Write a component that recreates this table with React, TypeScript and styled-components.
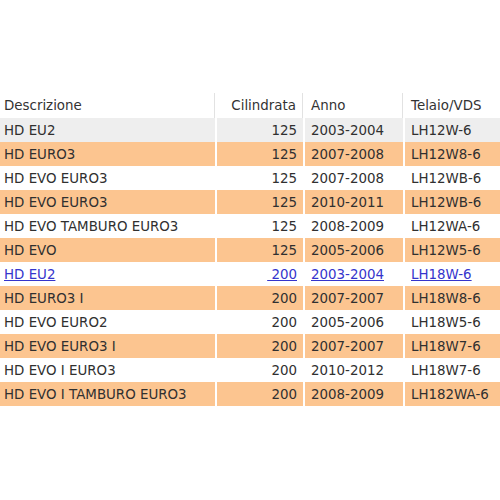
import React from "react";
import styled, { createGlobalStyle } from "styled-components";

const Global = createGlobalStyle`
  html, body { margin: 0; padding: 0; background: #ffffff; }
  body { font-family: "DejaVu Sans", Verdana, sans-serif; }
`;

const Page = styled.div`
  width: 500px;
  height: 500px;
  padding-top: 93px;
  box-sizing: border-box;
  overflow: hidden;
`;

const Table = styled.div`
  display: flex;
  flex-direction: column;
  width: 500px;
`;

const Row = styled.div<{ $bg: string }>`
  display: grid;
  grid-template-columns: 215px 86px 98px 1fr;
  column-gap: 2px;
  height: 24px;
  & > div { background: ${(p) => p.$bg}; }
`;

const HeaderRow = styled.div`
  display: grid;
  grid-template-columns: 215px 86px 98px 1fr;
  column-gap: 2px;
  height: 25px;
`;

const HeadCell = styled.div<{ $right?: boolean; $sep?: boolean; $pl?: number }>`
  display: flex;
  align-items: center;
  justify-content: ${(p) => (p.$right ? "flex-end" : "flex-start")};
  padding: 0 ${(p) => (p.$right ? "6px" : "0")} 0 ${(p) => (p.$right ? 0 : p.$pl ?? 4)}px;
  font-size: 13.4px;
  color: #333333;
  white-space: nowrap;
  border-right: ${(p) => (p.$sep ? "1px solid #e2e2e2" : "none")};
`;

const Cell = styled.div<{ $right?: boolean; $pl?: number }>`
  display: flex;
  align-items: center;
  justify-content: ${(p) => (p.$right ? "flex-end" : "flex-start")};
  padding: 0 ${(p) => (p.$right ? "6px" : "0")} 0 ${(p) => (p.$right ? 0 : p.$pl ?? 4)}px;
  font-size: 13.4px;
  color: #303030;
  white-space: pre;
  overflow: hidden;
`;

const Link = styled.span`
  color: #3535cc;
  text-decoration: underline;
`;

type R = [string, string, string, string];

const rows: R[] = [
  ["HD EU2", "125", "2003-2004", "LH12W-6"],
  ["HD EURO3", "125", "2007-2008", "LH12W8-6"],
  ["HD EVO EURO3", "125", "2007-2008", "LH12WB-6"],
  ["HD EVO EURO3", "125", "2010-2011", "LH12WB-6"],
  ["HD EVO TAMBURO EURO3", "125", "2008-2009", "LH12WA-6"],
  ["HD EVO", "125", "2005-2006", "LH12W5-6"],
  ["HD EU2", " 200", "2003-2004", "LH18W-6"],
  ["HD EURO3 I", "200", "2007-2007", "LH18W8-6"],
  ["HD EVO EURO2", "200", "2005-2006", "LH18W5-6"],
  ["HD EVO EURO3 I", "200", "2007-2007", "LH18W7-6"],
  ["HD EVO I EURO3", "200", "2010-2012", "LH18W7-6"],
  ["HD EVO I TAMBURO EURO3", "200", "2008-2009", "LH182WA-6"],
];

const bgFor = (i: number) => (i === 0 ? "#eeeeee" : i % 2 === 1 ? "#fcc590" : "#ffffff");

export default function App() {
  return (
    <Page>
      <Global />
      <Table>
        <HeaderRow>
          <HeadCell $sep>Descrizione</HeadCell>
          <HeadCell $right $sep>Cilindrata</HeadCell>
          <HeadCell $sep $pl={6}>Anno</HeadCell>
          <HeadCell $pl={6}>Telaio/VDS</HeadCell>
        </HeaderRow>
        {rows.map((r, i) => {
          const link = i === 6;
          return (
            <Row key={i} $bg={bgFor(i)}>
              <Cell>{link ? <Link>{r[0]}</Link> : r[0]}</Cell>
              <Cell $right>{link ? <Link>{r[1]}</Link> : r[1]}</Cell>
              <Cell $pl={6}>{link ? <Link>{r[2]}</Link> : r[2]}</Cell>
              <Cell $pl={6}>{link ? <Link>{r[3]}</Link> : r[3]}</Cell>
            </Row>
          );
        })}
      </Table>
    </Page>
  );
}
